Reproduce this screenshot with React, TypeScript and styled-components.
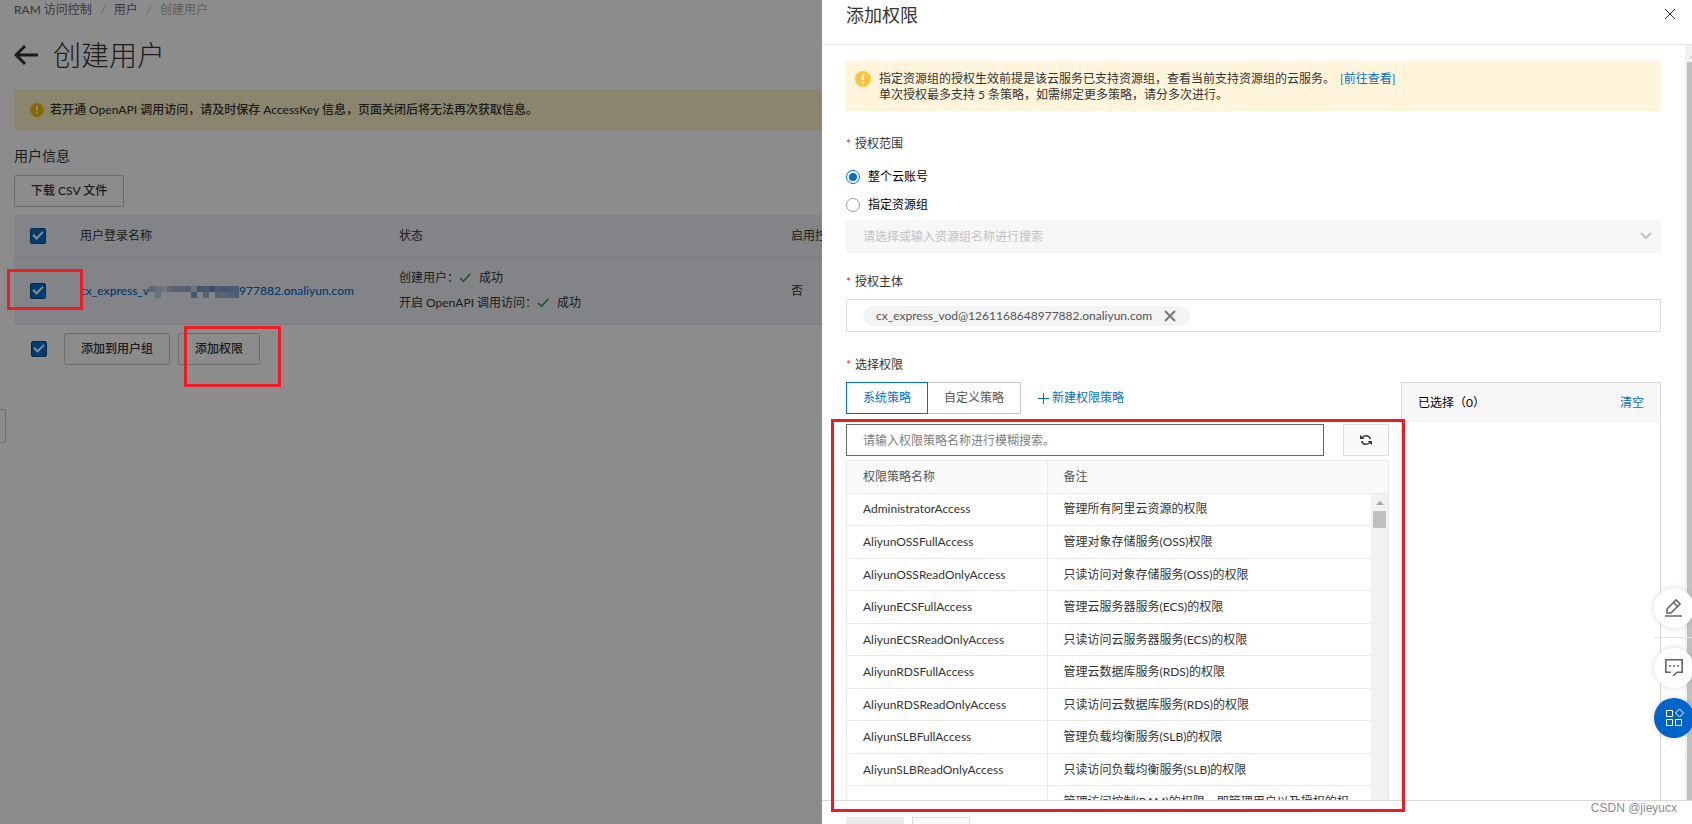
import React from 'react';
import styled, { createGlobalStyle, css } from 'styled-components';

const BLUE = '#0070cc';
const RED = '#ed1c24';

const GlobalStyle = createGlobalStyle`
  *, *::before, *::after { box-sizing: border-box; }
  body {
    margin: 0;
    color: #333;
    background: #fff;
    font: 12px/18px Lato, 'Noto Sans CJK SC', sans-serif;
  }
  button, input, select { font: inherit; color: inherit; }
  a { color: ${BLUE}; text-decoration: none; }
`;

const Screen = styled.div`
  position: relative;
  height: 100vh;
  overflow: hidden;
`;

/* ---------- shared parts ---------- */

const Annotation = styled.div<{ $box: string; $width?: number }>`
  position: absolute;
  inset: ${(p) => p.$box};
  z-index: 5;
  width: ${(p) => (p.$width ? `${p.$width}px` : 'auto')};
  border: 3px solid ${RED};
  pointer-events: none;
`;

const Checkbox = styled.input.attrs({ type: 'checkbox' })`
  appearance: none;
  display: grid;
  place-items: center;
  flex: none;
  width: 16px;
  height: 16px;
  margin: 0;
  border: 1px solid #004a8c;
  border-radius: 2px;
  background: #0070cc;
  &::after {
    content: '';
    width: 10px;
    height: 6px;
    margin-bottom: 3px;
    border: solid #fff;
    border-width: 0 0 2px 2px;
    transform: rotate(-45deg);
  }
`;

const Button = styled.button`
  height: 32px;
  padding: 0 16px;
  border: 1px solid #c0c6cc;
  border-radius: 2px;
  background: #fff;
  font-weight: 500;
  white-space: nowrap;
`;

const WarnIcon = ({ size, color }: { size: number; color: string }) => (
  <svg width={size} height={size} viewBox="0 0 16 16" aria-hidden="true">
    <circle cx="8" cy="8" r="8" fill={color} />
    <path d="M8 3.4v5.4M8 10.6v2" stroke="#fff" strokeWidth="2" />
  </svg>
);

const CrossIcon = ({ size, width }: { size: number; width: number }) => (
  <svg width={size} height={size} viewBox="0 0 12 12" aria-hidden="true">
    <path d="M1 1l10 10M11 1L1 11" stroke="currentColor" strokeWidth={width} fill="none" />
  </svg>
);

/* ---------- page under the drawer ---------- */

const Page = styled.main`
  padding: 0 14px;
`;

const Breadcrumb = styled.nav`
  display: flex;
  gap: 8px;
  height: 20px;
  line-height: 20px;
  a { color: #666; }
  i { width: 6px; color: #b5b5b5; font-style: normal; text-align: center; }
  span { color: #aaa; }
`;

const TitleRow = styled.div`
  display: flex;
  align-items: center;
  gap: 15px;
  height: 69px;
`;

const BackButton = styled.button`
  display: flex;
  padding: 0;
  border: 0;
  background: none;
`;

const Title = styled.h1`
  margin: 0;
  font-size: 28px;
  line-height: 40px;
  font-weight: 300;
`;

const PageNotice = styled.div`
  display: flex;
  align-items: center;
  gap: 6px;
  height: 41px;
  padding: 0 16px;
  background: #fdf3cc;
  font-weight: 500;
`;

const SectionTitle = styled.h2`
  margin: 16px 0 9px;
  font-size: 14px;
  line-height: 20px;
  font-weight: 400;
`;

const UserTable = styled.table`
  width: 100%;
  margin-top: 8px;
  border-collapse: collapse;
  table-layout: fixed;
  background: #eff1f7;
  th, td {
    padding: 0 0 0 16px;
    border-bottom: 1px solid #dcdee3;
    text-align: left;
    font-weight: 400;
  }
  th { height: 42px; }
  td { height: 67px; }
`;

const CheckCell = styled.div`
  position: relative;
  display: flex;
  align-items: center;
`;

const UserLink = styled.a`
  display: flex;
  align-items: center;
  color: #0064c8;
  font-weight: 500;
  white-space: nowrap;
`;

const StatusLine = styled.div`
  display: flex;
  align-items: center;
  height: 25px;
  svg { margin-right: 8px; }
`;

const BatchBar = styled.div`
  position: relative;
  display: flex;
  align-items: center;
  gap: 8px;
  padding: 8px 0 0 17px;
`;

const BatchCheck = styled(Checkbox)`
  margin-right: 9px;
`;

const CollapseHandle = styled.button`
  position: absolute;
  left: -8px;
  top: 409px;
  width: 14px;
  height: 34px;
  padding: 0;
  border: 1px solid #c0c6cc;
  border-radius: 2px;
  background: #fff;
`;

const Backdrop = styled.div`
  position: absolute;
  inset: 0;
  z-index: 2;
  background: rgba(0, 0, 0, 0.45);
`;

const mosaic: [number, number, string][] = [
  [0, 0, '#a9bcd9'], [1, 0, '#c3cbdd'], [2, 0, '#d4d4de'], [3, 0, '#b4b6d4'], [4, 0, '#a8b0d2'],
  [5, 0, '#a4b4d4'], [6, 0, '#98acd0'], [7, 0, '#c8d4e6'], [8, 0, '#7c9cca'], [9, 0, '#86a2cc'],
  [10, 0, '#7290c4'], [11, 0, '#8ea4d0'], [12, 0, '#8c98cc'], [13, 0, '#7ea4d2'], [14, 0, '#88a8d8'],
  [1, 1, '#bccbe2'], [7, 1, '#7ca4d0'], [9, 1, '#a6b2d2'], [11, 1, '#9cb4da'], [12, 1, '#a4b8da'],
  [13, 1, '#9cb0d6'], [14, 1, '#90aedc'],
];

const Mosaic = () => (
  <svg width="90" height="14" viewBox="0 0 90 14" aria-hidden="true">
    {mosaic.map(([c, r, fill]) => (
      <rect key={`${c}-${r}`} x={c * 6} y={r * 6 + 2} width="6" height="6" fill={fill} />
    ))}
  </svg>
);

const TickIcon = () => (
  <svg width="12" height="10" viewBox="0 0 12 10" aria-hidden="true">
    <path d="M1 5l3.4 3.4L11.2 1" stroke="#1e9e4a" strokeWidth="1.6" fill="none" />
  </svg>
);

/* ---------- drawer ---------- */

const Drawer = styled.aside`
  position: absolute;
  inset: 0 0 0 auto;
  z-index: 3;
  display: flex;
  flex-direction: column;
  width: min(870px, 100%);
  background: #fff;
`;

const DrawerHead = styled.header`
  display: flex;
  align-items: flex-start;
  justify-content: space-between;
  height: 45px;
  padding: 2px 16px 0 24px;
  border-bottom: 1px solid #e3e4e6;
  h2 { margin: 0; font-size: 18px; line-height: 26px; font-weight: 400; }
`;

const IconButton = styled.button`
  display: flex;
  padding: 6px 0;
  border: 0;
  background: none;
`;

const DrawerBody = styled.div`
  display: flex;
  flex: 1;
  min-height: 0;
  overflow: hidden;
`;

const BodyContent = styled.div`
  flex: 1;
  min-width: 0;
  padding: 16px 24px 0;
`;

const BodyScrollbar = styled.div`
  flex: none;
  display: flex;
  flex-direction: column;
  width: 7px;
  padding: 9px 0 0 2px;
  overflow: hidden;
  background: #f1f1f1;
  &::before {
    content: '';
    flex: none;
    width: 8px;
    margin: 0 0 4px 3px;
    border: solid transparent;
    border-width: 0 4px 4px;
    border-bottom-color: #a3a3a3;
  }
  &::after { content: ''; flex: 1; background: #c1c1c1; }
`;

const Notice = styled.div`
  display: flex;
  gap: 8px;
  padding: 10px 9px 8px;
  background: #fff5da;
  line-height: 16px;
  svg { flex: none; }
  a { margin-left: 5px; }
`;

const Field = styled.section<{ $gap: number }>`
  margin-top: ${(p) => p.$gap}px;
`;

const FieldLabel = styled.div`
  margin-bottom: 8px;
  &::before { content: '*'; margin-right: 4px; color: #d93026; }
`;

const RadioGroup = styled.div`
  padding: 2px 0;
`;

const RadioLabel = styled.label`
  display: flex;
  align-items: center;
  gap: 8px;
  height: 28px;
  color: #000;
`;

const Radio = styled.input.attrs({ type: 'radio' })`
  appearance: none;
  display: grid;
  place-items: center;
  width: 14px;
  height: 14px;
  margin: 0;
  border: 1px solid #999;
  border-radius: 50%;
  &:checked { border-color: ${BLUE}; }
  &:checked::after {
    content: '';
    width: 8px;
    height: 8px;
    border-radius: 50%;
    background: ${BLUE};
  }
`;

const SelectWrap = styled.div`
  position: relative;
  color: #c1c1c1;
  svg { position: absolute; right: 9px; top: 11px; }
`;

const Select = styled.select`
  appearance: none;
  display: block;
  width: 100%;
  height: 32px;
  padding: 0 16px;
  border: 1px solid #f3f3f3;
  border-radius: 0;
  background: #f7f7f7;
  color: #c1c1c1;
  opacity: 1;
`;

const TagBox = styled.div`
  display: flex;
  align-items: center;
  height: 33px;
  padding: 0 16px;
  border: 1px solid #dedede;
`;

const Tag = styled.span`
  display: flex;
  align-items: center;
  gap: 12px;
  height: 20px;
  padding: 0 14px 0 13px;
  border-radius: 10px;
  background: #f3f3f3;
  color: #555;
  button { color: #777; }
`;

const PolicyGrid = styled.div`
  display: grid;
  grid-template-columns: minmax(0, 1fr) 260px;
  gap: 12px;
`;

const TabRow = styled.div`
  display: flex;
  align-items: center;
  margin-bottom: 10px;
`;

const Tab = styled.button<{ $active?: boolean }>`
  height: 32px;
  padding: 0 16px;
  border: 1px solid #c4c6cf;
  border-left-width: 0;
  background: #fff;
  color: #555;
  ${(p) => p.$active && css`
    border: 1px solid ${BLUE};
    color: ${BLUE};
  `}
`;

const NewPolicy = styled.a`
  display: flex;
  align-items: center;
  gap: 3px;
  margin-left: 17px;
`;

const SearchRow = styled.div`
  display: flex;
  gap: 19px;
  margin-bottom: 4px;
`;

const SearchInput = styled.input`
  flex: 1;
  min-width: 0;
  height: 32px;
  padding: 0 16px;
  border: 1px solid #666;
  border-radius: 0;
  &::placeholder { color: #808080; opacity: 1; }
`;

const RefreshButton = styled.button`
  display: grid;
  place-items: center;
  width: 46px;
  height: 32px;
  border: 1px solid #dedede;
  background: #fafafa;
`;

const PolicyColumn = styled.div`
  min-width: 0;
`;

const PolicyBox = styled.div`
  border: 1px solid #ebebeb;
  border-bottom: 0;
`;

const PolicyScroll = styled.div`
  display: flex;
`;

const PolicyTable = styled.table`
  flex: 1;
  width: 100%;
  border-collapse: collapse;
  table-layout: fixed;
  background: #fafafa;
  thead th { height: 32px; color: #555; }
  th, td {
    padding: 0 16px;
    border-bottom: 1px solid #ebebeb;
    text-align: left;
    font-weight: 400;
  }
  th:first-child, td:first-child { border-right: 1px solid #ebebeb; }
  tbody { background: #fff; }
  tbody tr { height: 32px; }
  tbody tr:nth-child(even) { height: 33px; }
  tbody tr:last-child td { padding-block: 7px; }
`;

const ListScrollbar = styled.div`
  flex: none;
  display: flex;
  flex-direction: column;
  align-items: center;
  gap: 6px;
  width: 17px;
  padding-top: 7px;
  background: #f1f1f1;
  &::before {
    content: '';
    border: solid transparent;
    border-width: 0 4px 4px;
    border-bottom-color: #a3a3a3;
  }
  &::after { content: ''; width: 13px; height: 17px; background: #c1c1c1; }
`;

const SelectedPanel = styled.div`
  border: 1px solid #d9d9d9;
  header {
    display: flex;
    align-items: center;
    justify-content: space-between;
    height: 40px;
    padding: 0 16px;
    background: #f7f7f7;
    color: #000;
  }
`;

const DrawerFoot = styled.footer`
  display: flex;
  gap: 8px;
  flex: none;
  height: 24px;
  padding: 16px 24px 0;
  border-top: 1px solid #d9d9d9;
  overflow: hidden;
`;

const FootButton = styled.button<{ $plain?: boolean }>`
  width: 58px;
  height: 32px;
  border: ${(p) => (p.$plain ? '1px solid #dedede' : '0')};
  background: ${(p) => (p.$plain ? '#fafafa' : '#ebebeb')};
`;

/* ---------- floating layer ---------- */

const FloatBar = styled.div`
  position: absolute;
  right: -2px;
  top: 588px;
  z-index: 6;
  display: flex;
  flex-direction: column;
  width: 40px;
  hr { width: 100%; margin: 9px 0 10px; border: 0; border-top: 1px solid #e3e3e3; }
`;

const FloatButton = styled.button<{ $primary?: boolean }>`
  display: grid;
  place-items: center;
  width: 40px;
  height: 40px;
  padding: 0;
  border: 0;
  border-radius: 50%;
  background: ${(p) => (p.$primary ? '#0064c8' : '#fff')};
  color: ${(p) => (p.$primary ? '#fff' : '#666')};
  box-shadow: 0 0 6px rgba(0, 0, 0, 0.15);
  & + & { margin-top: 10px; }
`;

const Watermark = styled.div`
  position: absolute;
  right: 15px;
  bottom: 7px;
  z-index: 6;
  color: #8c8c8c;
  font-family: 'Liberation Sans', sans-serif;
`;

const policies: [string, string][] = [
  ['AdministratorAccess', '管理所有阿里云资源的权限'],
  ['AliyunOSSFullAccess', '管理对象存储服务(OSS)权限'],
  ['AliyunOSSReadOnlyAccess', '只读访问对象存储服务(OSS)的权限'],
  ['AliyunECSFullAccess', '管理云服务器服务(ECS)的权限'],
  ['AliyunECSReadOnlyAccess', '只读访问云服务器服务(ECS)的权限'],
  ['AliyunRDSFullAccess', '管理云数据库服务(RDS)的权限'],
  ['AliyunRDSReadOnlyAccess', '只读访问云数据库服务(RDS)的权限'],
  ['AliyunSLBFullAccess', '管理负载均衡服务(SLB)的权限'],
  ['AliyunSLBReadOnlyAccess', '只读访问负载均衡服务(SLB)的权限'],
  ['', '管理访问控制(RAM)的权限，即管理用户以及授权的权限'],
];

export default function App() {
  return (
    <Screen>
      <GlobalStyle />
      <Page>
        <Breadcrumb>
          <a href="#ram">RAM 访问控制</a>
          <i>/</i>
          <a href="#users">用户</a>
          <i>/</i>
          <span>创建用户</span>
        </Breadcrumb>
        <TitleRow>
          <BackButton aria-label="返回">
            <svg width="24" height="20" viewBox="0 0 24 20" aria-hidden="true">
              <path d="M11 1L2 10l9 9M2 10h22" stroke="#333" strokeWidth="3" fill="none" />
            </svg>
          </BackButton>
          <Title>创建用户</Title>
        </TitleRow>
        <PageNotice>
          <WarnIcon size={14} color="#f5bf00" />
          若开通 OpenAPI 调用访问，请及时保存 AccessKey 信息，页面关闭后将无法再次获取信息。
        </PageNotice>
        <SectionTitle>用户信息</SectionTitle>
        <Button>下载 CSV 文件</Button>
        <UserTable>
          <colgroup>
            <col style={{ width: 50 }} />
            <col style={{ width: 319 }} />
            <col style={{ width: 392 }} />
            <col />
          </colgroup>
          <thead>
            <tr>
              <th><CheckCell><Checkbox defaultChecked aria-label="全选" /></CheckCell></th>
              <th>用户登录名称</th>
              <th>状态</th>
              <th>启用控制台登录</th>
            </tr>
          </thead>
          <tbody>
            <tr>
              <td>
                <CheckCell>
                  <Checkbox defaultChecked aria-label="选择用户" />
                  <Annotation $box="-14px -19px -11px -23px" />
                </CheckCell>
              </td>
              <td>
                <UserLink href="#user">cx_express_v<Mosaic />977882.onaliyun.com</UserLink>
              </td>
              <td>
                <StatusLine>创建用户：<TickIcon />成功</StatusLine>
                <StatusLine>开启 OpenAPI 调用访问：<TickIcon />成功</StatusLine>
              </td>
              <td>否</td>
            </tr>
          </tbody>
        </UserTable>
        <BatchBar>
          <BatchCheck defaultChecked aria-label="选择全部用户" />
          <Button>添加到用户组</Button>
          <Button>添加权限</Button>
          <Annotation $box="1px auto -22px 170px" $width={97} />
        </BatchBar>
      </Page>
      <CollapseHandle aria-label="展开菜单" />
      <Backdrop />

      <Drawer aria-label="添加权限">
        <DrawerHead>
          <h2>添加权限</h2>
          <IconButton aria-label="关闭"><CrossIcon size={12} width={1} /></IconButton>
        </DrawerHead>
        <DrawerBody>
          <BodyContent>
            <Notice>
              <WarnIcon size={16} color="#ffc440" />
              <div>
                指定资源组的授权生效前提是该云服务已支持资源组，查看当前支持资源组的云服务。
                <a href="#services">[前往查看]</a>
                <br />
                单次授权最多支持 5 条策略，如需绑定更多策略，请分多次进行。
              </div>
            </Notice>
            <Field $gap={24}>
              <FieldLabel>授权范围</FieldLabel>
              <RadioGroup>
                <RadioLabel><Radio name="scope" defaultChecked />整个云账号</RadioLabel>
                <RadioLabel><Radio name="scope" />指定资源组</RadioLabel>
              </RadioGroup>
              <SelectWrap>
                <Select disabled aria-label="资源组">
                  <option>请选择或输入资源组名称进行搜索</option>
                </Select>
                <svg width="12" height="8" viewBox="0 0 12 8" aria-hidden="true">
                  <path d="M1 1l5 5 5-5" stroke="currentColor" strokeWidth="2" fill="none" />
                </svg>
              </SelectWrap>
            </Field>
            <Field $gap={20}>
              <FieldLabel>授权主体</FieldLabel>
              <TagBox>
                <Tag>
                  cx_express_vod@1261168648977882.onaliyun.com
                  <IconButton aria-label="移除"><CrossIcon size={12} width={2} /></IconButton>
                </Tag>
              </TagBox>
            </Field>
            <Field $gap={24}>
              <FieldLabel>选择权限</FieldLabel>
              <PolicyGrid>
                <PolicyColumn>
                  <TabRow>
                    <Tab $active>系统策略</Tab>
                    <Tab>自定义策略</Tab>
                    <NewPolicy href="#new">
                      <svg width="11" height="11" viewBox="0 0 11 11" aria-hidden="true">
                        <path d="M5.5 0v11M0 5.5h11" stroke="currentColor" />
                      </svg>
                      新建权限策略
                    </NewPolicy>
                  </TabRow>
                  <SearchRow>
                    <SearchInput aria-label="搜索权限策略" placeholder="请输入权限策略名称进行模糊搜索。" />
                    <RefreshButton aria-label="刷新">
                      <svg width="12" height="12" viewBox="0 0 12 12" fill="none" stroke="#333" strokeWidth="1.5" aria-hidden="true">
                        <path d="M2 4a4.6 4.6 0 0 1 8.400 1M10 8a4.6 4.6 0 0 1-8.400-1" />
                        <path d="M0 .8V5h4.200zM12 11.200V7H7.800z" fill="#333" stroke="none" />
                      </svg>
                    </RefreshButton>
                  </SearchRow>
                  <PolicyBox>
                    <PolicyTable>
                      <colgroup><col style={{ width: 200 }} /><col /></colgroup>
                      <thead><tr><th>权限策略名称</th><th>备注</th></tr></thead>
                    </PolicyTable>
                    <PolicyScroll>
                      <PolicyTable aria-label="权限策略">
                        <colgroup><col style={{ width: 200 }} /><col /></colgroup>
                        <tbody>
                          {policies.map(([name, note]) => (
                            <tr key={note}><td>{name}</td><td>{note}</td></tr>
                          ))}
                        </tbody>
                      </PolicyTable>
                      <ListScrollbar />
                    </PolicyScroll>
                  </PolicyBox>
                </PolicyColumn>
                <SelectedPanel>
                  <header>
                    <span>已选择（0）</span>
                    <a href="#clear">清空</a>
                  </header>
                </SelectedPanel>
              </PolicyGrid>
            </Field>
          </BodyContent>
          <BodyScrollbar />
        </DrawerBody>
        <DrawerFoot>
          <FootButton aria-label="确定" />
          <FootButton $plain aria-label="取消" />
        </DrawerFoot>
        <Annotation $box="419px 287px 12px 9px" />
      </Drawer>

      <FloatBar>
        <FloatButton aria-label="编辑">
          <svg width="20" height="20" viewBox="0 0 20 20" fill="none" stroke="currentColor" strokeWidth="1.6" aria-hidden="true">
            <path d="M1 18h17M3 15v-4l9-9 4 4-9 9zM9.500 4.500l4 4" />
          </svg>
        </FloatButton>
        <hr />
        <FloatButton aria-label="反馈">
          <svg width="20" height="20" viewBox="0 0 20 20" fill="none" stroke="currentColor" strokeWidth="1.6" aria-hidden="true">
            <path d="M7 14.200H1.800V1.800h16.400v12.400H13L9 18" />
            <path d="M5 8h2M9 8h2M13 8h2" />
          </svg>
        </FloatButton>
        <FloatButton $primary aria-label="应用">
          <svg width="20" height="20" viewBox="0 0 20 20" fill="none" stroke="currentColor" aria-hidden="true">
            <path d="M2.500 2.500h6v6h-6zM2.500 11.500h6v6h-6zM11.500 11.500h6v6h-6zM15.500 1l4 4-4 4-4-4z" />
          </svg>
        </FloatButton>
      </FloatBar>
      <Watermark>CSDN @jieyucx</Watermark>
    </Screen>
  );
}
